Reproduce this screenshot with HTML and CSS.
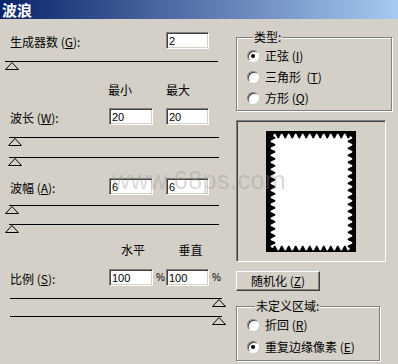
FILE: index.html
```html
<!DOCTYPE html>
<html lang="zh-CN">
<head>
    <meta charset="UTF-8">
    <title>波浪</title>
    <link rel="stylesheet" href="styles.css">
</head>
<body>

<div class="dialog">
    <div class="titlebar">波浪</div>

    <div class="body">
        <!-- Left: parameters -->
        <div class="left">
            <div class="row row-gen">
                <span class="label label-wide">生成器数 (<u>G</u>):</span>
                <input class="num num-b" type="text" value="2">
            </div>
            <div class="slider s-gen"><svg class="thumb" width="14" height="8"><polygon points="0.5,7.5 7,0.5 13.5,7.5" fill="none" stroke="#000"/></svg></div>

            <div class="heads heads-minmax">
                <span class="head">最小</span>
                <span class="head">最大</span>
            </div>

            <div class="row row-len">
                <span class="label">波长 (<u>W</u>):</span>
                <input class="num num-a" type="text" value="20">
                <span class="pct"></span>
                <input class="num num-b" type="text" value="20">
            </div>
            <div class="slider s-wave s-len1"><svg class="thumb" width="14" height="8"><polygon points="0.5,7.5 7,0.5 13.5,7.5" fill="none" stroke="#000"/></svg></div>
            <div class="slider s-wave s-len2"><svg class="thumb" width="14" height="8"><polygon points="0.5,7.5 7,0.5 13.5,7.5" fill="none" stroke="#000"/></svg></div>

            <div class="row row-amp">
                <span class="label">波幅 (<u>A</u>):</span>
                <input class="num num-a" type="text" value="6">
                <span class="pct"></span>
                <input class="num num-b" type="text" value="6">
            </div>
            <div class="slider s-wave s-amp1"><svg class="thumb thumb-amp" width="14" height="8"><polygon points="0.5,7.5 7,0.5 13.5,7.5" fill="none" stroke="#000"/></svg></div>
            <div class="slider s-wave s-amp2"><svg class="thumb thumb-amp" width="14" height="8"><polygon points="0.5,7.5 7,0.5 13.5,7.5" fill="none" stroke="#000"/></svg></div>

            <div class="heads heads-scale">
                <span class="head">水平</span>
                <span class="head">垂直</span>
            </div>

            <div class="row row-scale">
                <span class="label">比例 (<u>S</u>):</span>
                <input class="num num-a" type="text" value="100">
                <span class="pct">%</span>
                <input class="num num-b" type="text" value="100">
                <span class="pct">%</span>
            </div>
            <div class="slider s-scale s-scale1"><svg class="thumb" width="14" height="8"><polygon points="0.5,7.5 7,0.5 13.5,7.5" fill="none" stroke="#000"/></svg></div>
            <div class="slider s-scale s-scale2"><svg class="thumb" width="14" height="8"><polygon points="0.5,7.5 7,0.5 13.5,7.5" fill="none" stroke="#000"/></svg></div>
        </div>

        <!-- Right: type, preview, undefined area -->
        <div class="right">
            <fieldset class="group group-type">
                <legend>类型:</legend>
                <div class="radio-row"><span class="radio checked"></span><span>正弦 (<u>I</u>)</span></div>
                <div class="radio-row"><span class="radio"></span><span>三角形&nbsp; (<u>T</u>)</span></div>
                <div class="radio-row"><span class="radio"></span><span>方形 (<u>Q</u>)</span></div>
            </fieldset>

            <div class="preview">
                <svg width="90" height="121" viewBox="0 0 90 121">
                    <rect width="90" height="121" fill="#000"/>
                    <path fill="#fff" d="M7 5
                        q1.75 -5 3.5 0 q1.75 5 3.5 0 q1.75 -5 3.5 0 q1.75 5 3.5 0 q1.75 -5 3.5 0 q1.75 5 3.5 0
                        q1.75 -5 3.5 0 q1.75 5 3.5 0 q1.75 -5 3.5 0 q1.75 5 3.5 0 q1.75 -5 3.5 0 q1.75 5 3.5 0
                        q1.75 -5 3.5 0 q1.75 5 3.5 0 q1.75 -5 3.5 0 q1.75 5 3.5 0 q1.75 -5 3.5 0 q1.75 5 3.5 0
                        q1.75 -5 3.5 0 q1.75 5 3.5 0 q1.75 -5 3.5 0 q1.75 5 3.5 0
                        q5 1.75 0 3.5 q-5 1.75 0 3.5 q5 1.75 0 3.5 q-5 1.75 0 3.5 q5 1.75 0 3.5 q-5 1.75 0 3.5
                        q5 1.75 0 3.5 q-5 1.75 0 3.5 q5 1.75 0 3.5 q-5 1.75 0 3.5 q5 1.75 0 3.5 q-5 1.75 0 3.5
                        q5 1.75 0 3.5 q-5 1.75 0 3.5 q5 1.75 0 3.5 q-5 1.75 0 3.5 q5 1.75 0 3.5 q-5 1.75 0 3.5
                        q5 1.75 0 3.5 q-5 1.75 0 3.5 q5 1.75 0 3.5 q-5 1.75 0 3.5 q5 1.75 0 3.5 q-5 1.75 0 3.5
                        q5 1.75 0 3.5 q-5 1.75 0 3.5 q5 1.75 0 3.5 q-5 1.75 0 3.5 q5 1.75 0 3.5 q-5 1.75 0 3.5
                        q5 1.75 0 3.5 q-5 1.75 0 3.5
                        q-1.75 5 -3.5 0 q-1.75 -5 -3.5 0 q-1.75 5 -3.5 0 q-1.75 -5 -3.5 0 q-1.75 5 -3.5 0 q-1.75 -5 -3.5 0
                        q-1.75 5 -3.5 0 q-1.75 -5 -3.5 0 q-1.75 5 -3.5 0 q-1.75 -5 -3.5 0 q-1.75 5 -3.5 0 q-1.75 -5 -3.5 0
                        q-1.75 5 -3.5 0 q-1.75 -5 -3.5 0 q-1.75 5 -3.5 0 q-1.75 -5 -3.5 0 q-1.75 5 -3.5 0 q-1.75 -5 -3.5 0
                        q-1.75 5 -3.5 0 q-1.75 -5 -3.5 0 q-1.75 5 -3.5 0 q-1.75 -5 -3.5 0
                        q-5 -1.75 0 -3.5 q5 -1.75 0 -3.5 q-5 -1.75 0 -3.5 q5 -1.75 0 -3.5 q-5 -1.75 0 -3.5 q5 -1.75 0 -3.5
                        q-5 -1.75 0 -3.5 q5 -1.75 0 -3.5 q-5 -1.75 0 -3.5 q5 -1.75 0 -3.5 q-5 -1.75 0 -3.5 q5 -1.75 0 -3.5
                        q-5 -1.75 0 -3.5 q5 -1.75 0 -3.5 q-5 -1.75 0 -3.5 q5 -1.75 0 -3.5 q-5 -1.75 0 -3.5 q5 -1.75 0 -3.5
                        q-5 -1.75 0 -3.5 q5 -1.75 0 -3.5 q-5 -1.75 0 -3.5 q5 -1.75 0 -3.5 q-5 -1.75 0 -3.5 q5 -1.75 0 -3.5
                        q-5 -1.75 0 -3.5 q5 -1.75 0 -3.5 q-5 -1.75 0 -3.5 q5 -1.75 0 -3.5 q-5 -1.75 0 -3.5 q5 -1.75 0 -3.5
                        q-5 -1.75 0 -3.5 q5 -1.75 0 -3.5 Z"/>
                </svg>
            </div>

            <button class="btn">随机化 (<u>Z</u>)</button>

            <fieldset class="group group-area">
                <legend>未定义区域:</legend>
                <div class="radio-row"><span class="radio"></span><span>折回 (<u>R</u>)</span></div>
                <div class="radio-row"><span class="radio checked"></span><span>重复边缘像素 (<u>E</u>)</span></div>
            </fieldset>
        </div>
    </div>

    <!-- site watermark over the screenshot -->
    <span class="watermark">www.68ps.com</span>
</div>

</body>
</html>
```

FILE: styles.css
```css
body {
    margin: 0;
    background: #d4d0c8;
}
.dialog {
    position: relative;
    width: 398px;
    height: 364px;
    overflow: hidden;
    background: #d4d0c8;
    font-family: "Noto Sans CJK SC", "Liberation Sans", sans-serif;
    font-size: 12px;
    color: #000;
}
.titlebar {
    height: 19px;
    line-height: 19px;
    padding-left: 2px;
    background: linear-gradient(to right, #0a246a, #a6caf0);
    color: #fff;
    font-weight: bold;
    font-size: 15px;
}
u {
    text-decoration: underline;
    text-underline-offset: 1px;
}
.body {
    display: flex;
}

/* left column */
.left {
    width: 236px;
    display: flex;
    flex-direction: column;
}
.row {
    display: flex;
    align-items: center;
    height: 17px;
}
.label {
    box-sizing: border-box;
    width: 109px;
    padding-left: 10px;
    line-height: 14px;
    padding-top: 2px;
}
.label-wide {
    width: 166px;
}
.num {
    box-sizing: border-box;
    height: 17px;
    margin: 0;
    padding: 1px 0 0 2px;
    border: 1px solid;
    border-color: #808080 #fff #fff #808080;
    box-shadow: inset 1px 1px #404040, inset -1px -1px #d4d0c8;
    background: #fff;
    font-family: "Liberation Sans", sans-serif;
    font-size: 11px;
    outline: none;
}
.num-a {
    width: 44px;
}
.num-b {
    width: 43px;
}
.pct {
    box-sizing: border-box;
    width: 13px;
    padding-left: 3px;
    font-family: "Liberation Sans", sans-serif;
    font-size: 10px;
}
.heads {
    display: flex;
    line-height: 14px;
}
.head {
    width: 58px;
}
.heads-minmax {
    padding-left: 108px;
}
.heads-scale {
    padding-left: 121px;
}

.slider {
    display: flex;
    height: 8px;
    border-top: 1px solid #000;
}
.thumb {
    display: block;
}
.s-gen {
    margin: 12px 0 0 5px;
    width: 213px;
}
.s-wave {
    margin-left: 9px;
    width: 210px;
}
.s-wave .thumb {
    margin-left: -1px;
}
.s-wave .thumb-amp {
    margin-left: -4px;
}
.s-scale {
    margin-left: 10px;
    width: 212px;
    justify-content: flex-end;
}
.s-scale .thumb {
    margin-right: -4px;
}
.row-gen { margin-top: 13px; }
.heads-minmax { margin-top: 13px; }
.row-len { margin-top: 11px; }
.s-len1 { margin-top: 12px; }
.s-len2 { margin-top: 11px; }
.row-amp { margin-top: 12px; }
.s-amp1 { margin-top: 10px; }
.s-amp2 { margin-top: 10px; }
.heads-scale { margin-top: 10px; }
.row-scale { margin-top: 12px; }
.s-scale1 { margin-top: 12px; }
.s-scale2 { margin-top: 9px; }

/* right column */
.right {
    width: 156px;
    display: flex;
    flex-direction: column;
    align-items: flex-start;
}
.group {
    box-sizing: border-box;
    min-width: 0;
    margin: 0;
    padding: 1px 0 2px 10px;
    border: 1px solid #808080;
    box-shadow: inset 1px 1px #fff, 1px 1px #fff;
}
.group legend {
    padding: 0 1px;
    line-height: 14px;
    background: #d4d0c8;
}
.group-type {
    width: 156px;
    margin-top: 11px;
}
.group-type legend {
    margin-left: 6px;
}
.group-area {
    width: 144px;
    margin-top: 8px;
    padding-bottom: 3px;
}
.group-area legend {
    margin-left: 8px;
}
.radio-row {
    display: flex;
    align-items: center;
    gap: 6px;
    height: 21px;
    line-height: 14px;
}
.group-area .radio-row + .radio-row {
    margin-top: 1px;
}
.radio {
    position: relative;
    box-sizing: border-box;
    width: 12px;
    height: 12px;
    border-radius: 50%;
    border: 1px solid;
    border-color: #808080 #fff #fff #808080;
    box-shadow: inset 1px 1px #404040;
    background: #fff;
}
.radio.checked::after {
    content: "";
    position: absolute;
    left: 3px;
    top: 3px;
    width: 4px;
    height: 4px;
    border-radius: 50%;
    background: #000;
}
.preview {
    box-sizing: border-box;
    width: 150px;
    height: 142px;
    margin-top: 9px;
    display: flex;
    align-items: center;
    justify-content: center;
    border: 1px solid;
    border-color: #808080 #fff #fff #808080;
    box-shadow: inset 1px 1px #404040;
}
.preview svg {
    display: block;
}
.btn {
    box-sizing: border-box;
    width: 84px;
    height: 20px;
    margin-top: 9px;
    padding: 0;
    border: 1px solid;
    border-color: #fff #404040 #404040 #fff;
    box-shadow: inset -1px -1px #808080;
    background: #d4d0c8;
    font-family: "Noto Sans CJK SC", sans-serif;
    font-size: 12px;
    line-height: 14px;
    color: #000;
}
.watermark {
    position: absolute;
    left: 112px;
    top: 166px;
    font-family: "Liberation Sans", sans-serif;
    font-size: 25px;
    letter-spacing: 0.5px;
    color: rgba(150, 146, 140, 0.35);
    pointer-events: none;
}
```
